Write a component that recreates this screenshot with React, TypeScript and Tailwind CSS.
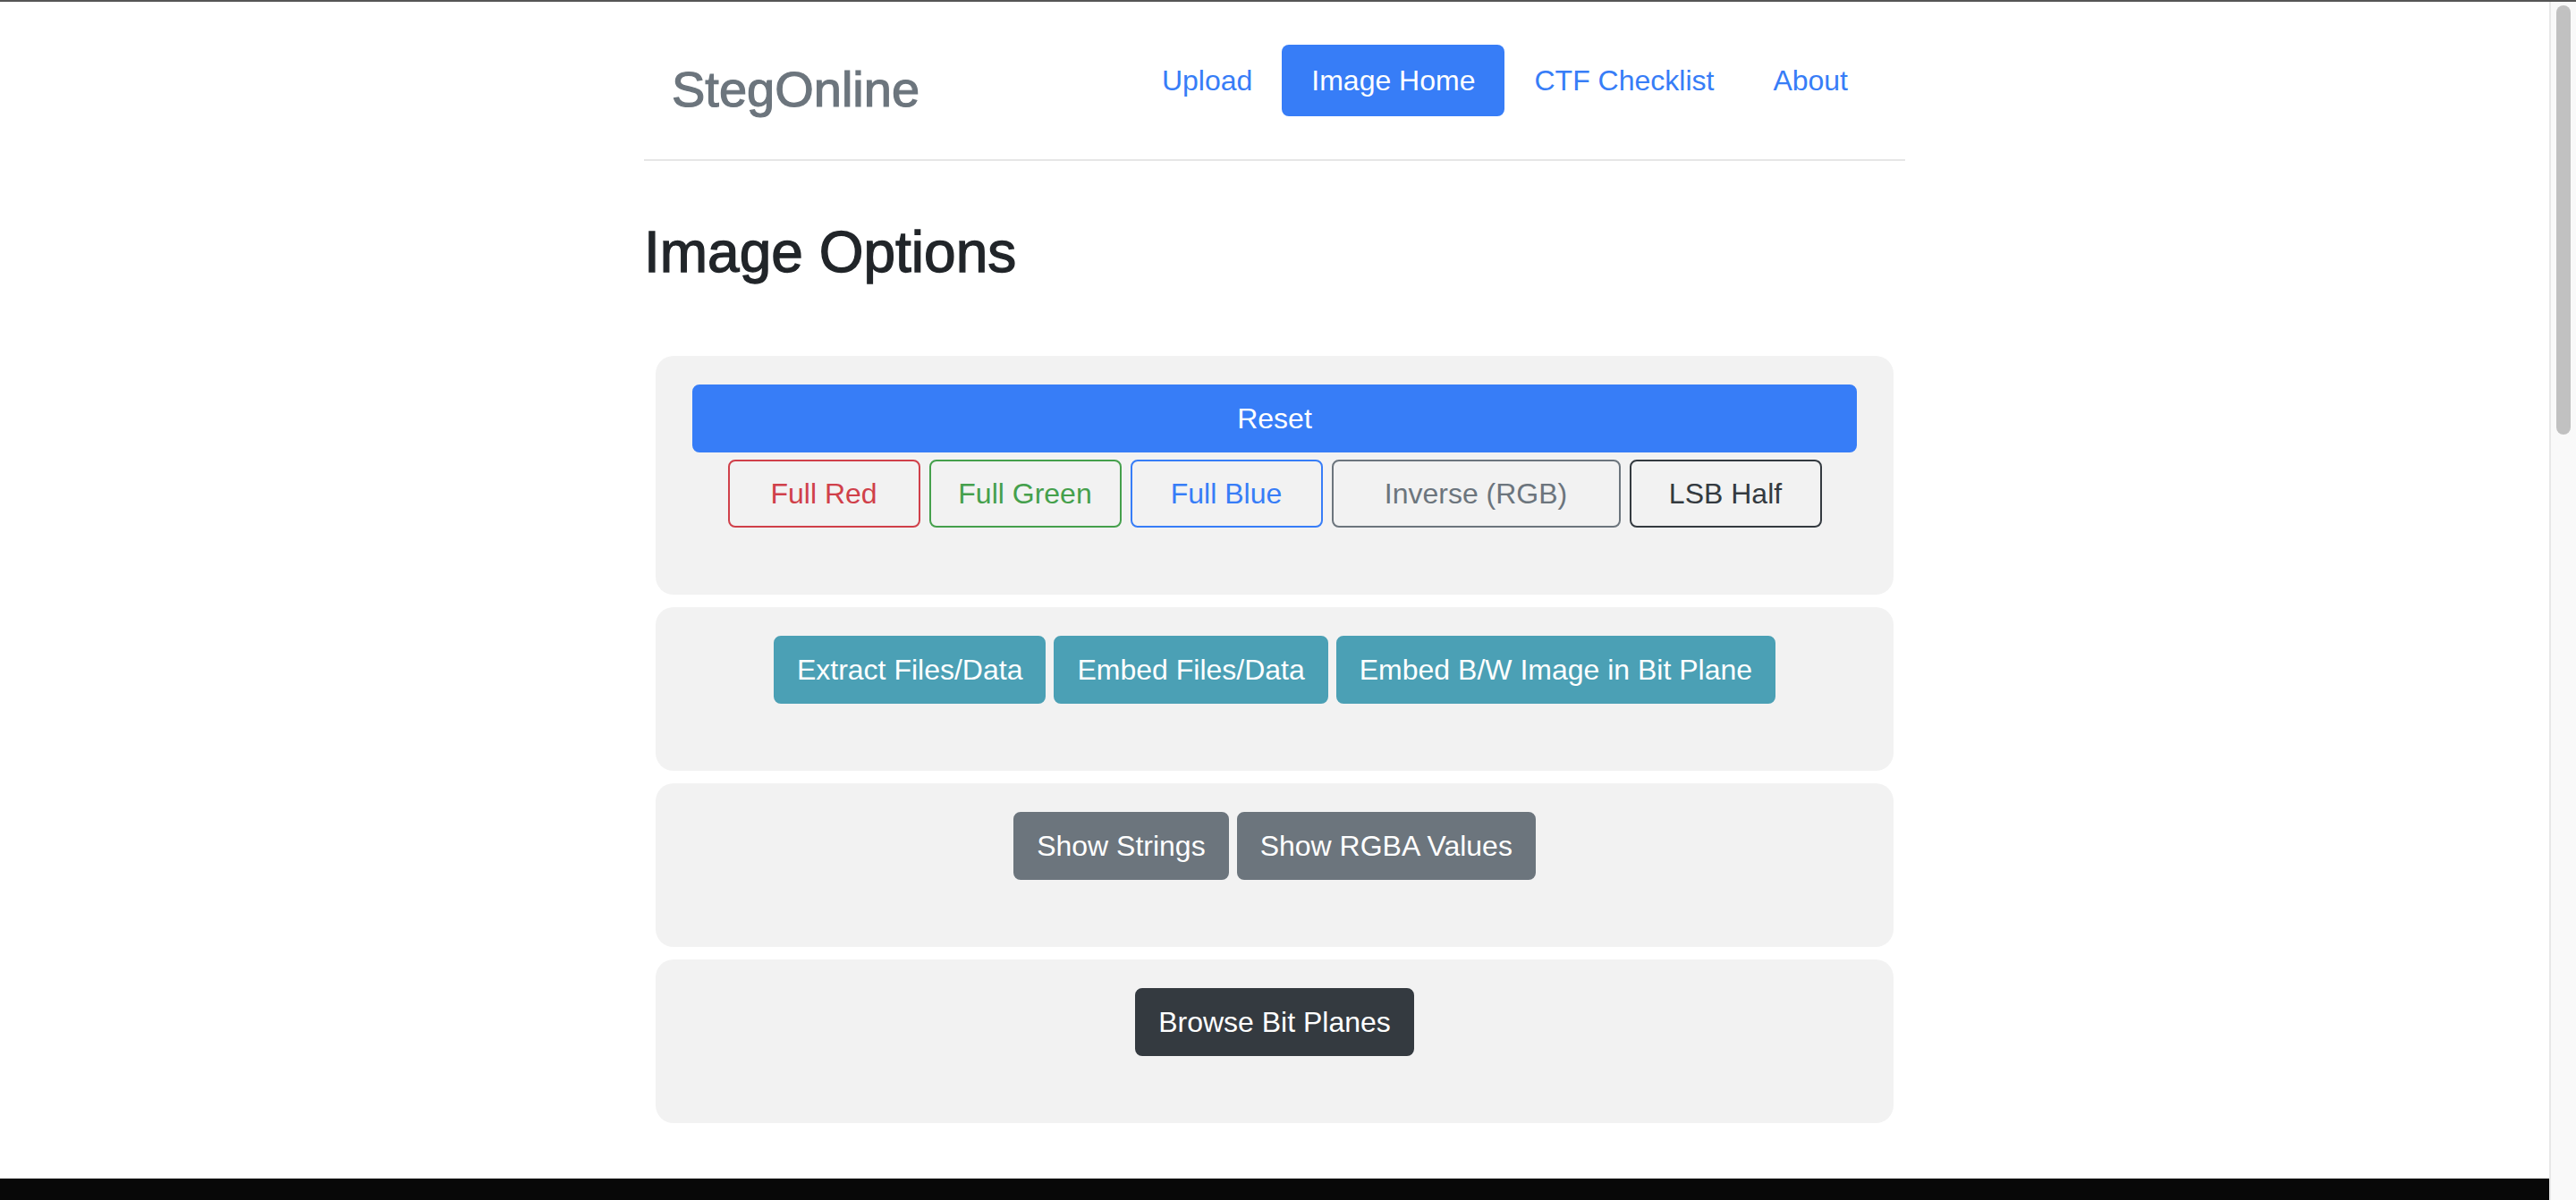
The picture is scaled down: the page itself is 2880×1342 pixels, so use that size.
import React from "react";

const font = { fontFamily: '"Liberation Sans", Arial, Helvetica, sans-serif' };

function Btn({ children, cls }: { children: React.ReactNode; cls: string }) {
  return (
    <button
      className={`box-border h-[76px] rounded-[8px] border-2 px-[24px] py-[12px] text-[32px] leading-[48px] whitespace-nowrap ${cls}`}
    >
      {children}
    </button>
  );
}

export default function App() {
  return (
    <div className="flex h-[1342px] w-[2880px] flex-col overflow-hidden bg-white" style={font}>
      <div className="h-[2px] w-full shrink-0 bg-[#555555]" />
      <div className="flex min-h-0 flex-1">
        <div className="flex min-w-0 flex-1 flex-col">
          <div className="mx-auto w-[1410px]">
            <header className="flex h-[178px] items-start justify-between border-b-2 border-[#e6e6e6] pr-[31px] pl-[31px] pt-[48px]">
              <div className="mt-[16px] text-[56px] leading-[1.2] font-medium text-[#6c757d] [-webkit-text-stroke:1.2px_#6c757d]">
                StegOnline
              </div>
              <nav className="flex items-center text-[32px] leading-[48px]">
                <a className="px-[33px] py-[16px] text-[#377df7]">Upload</a>
                <a className="rounded-[8px] bg-[#377df7] px-[33px] py-[16px] text-white">Image Home</a>
                <a className="px-[33px] py-[16px] text-[#377df7]">CTF Checklist</a>
                <a className="px-[33px] py-[16px] text-[#377df7]">About</a>
              </nav>
            </header>

            <h1 className="mt-[64px] text-[64px] leading-[1.2] font-medium text-[#212529] [-webkit-text-stroke:1.3px_#212529]">
              Image Options
            </h1>

            <div className="mx-[13px] mt-[77px] flex flex-col gap-[14px]">
              <section className="rounded-[20px] bg-[#f2f2f2] px-[41px] pt-[32px] pb-[75px]">
                <Btn cls="w-full border-[#377df7] bg-[#377df7] text-white">Reset</Btn>
                <div className="mt-[8px] flex justify-center gap-[10px]">
                  <Btn cls="w-[215px] border-[#d0404a] bg-transparent text-[#d0404a]">Full Red</Btn>
                  <Btn cls="w-[215px] border-[#45a04c] bg-transparent text-[#45a04c]">Full Green</Btn>
                  <Btn cls="w-[215px] border-[#377df7] bg-transparent text-[#377df7]">Full Blue</Btn>
                  <Btn cls="w-[323px] border-[#6c757d] bg-transparent text-[#6c757d]">Inverse (RGB)</Btn>
                  <Btn cls="w-[215px] border-[#343a40] bg-transparent text-[#343a40]">LSB Half</Btn>
                </div>
              </section>

              <section className="flex justify-center gap-[9px] rounded-[20px] bg-[#f2f2f2] px-[41px] pt-[32px] pb-[75px]">
                <Btn cls="border-[#4ba0b5] bg-[#4ba0b5] text-white">Extract Files/Data</Btn>
                <Btn cls="border-[#4ba0b5] bg-[#4ba0b5] text-white">Embed Files/Data</Btn>
                <Btn cls="border-[#4ba0b5] bg-[#4ba0b5] text-white">Embed B/W Image in Bit Plane</Btn>
              </section>

              <section className="flex justify-center gap-[9px] rounded-[20px] bg-[#f2f2f2] px-[41px] pt-[32px] pb-[75px]">
                <Btn cls="border-[#6c757d] bg-[#6c757d] text-white">Show Strings</Btn>
                <Btn cls="border-[#6c757d] bg-[#6c757d] text-white">Show RGBA Values</Btn>
              </section>

              <section className="flex justify-center rounded-[20px] bg-[#f2f2f2] px-[41px] pt-[32px] pb-[75px]">
                <Btn cls="border-[#343a40] bg-[#343a40] text-white">Browse Bit Planes</Btn>
              </section>
            </div>
          </div>
          <div className="mt-auto h-[24px] w-full shrink-0 bg-[#080808]" />
        </div>

        <div className="box-border flex w-[30px] shrink-0 flex-col border-l-2 border-[#e8e8e8] bg-[#f9f9f9] pt-[4px] pl-[6px]">
          <div className="h-[480px] w-[16px] rounded-full bg-[#c1c1c1]" />
        </div>
      </div>
    </div>
  );
}
